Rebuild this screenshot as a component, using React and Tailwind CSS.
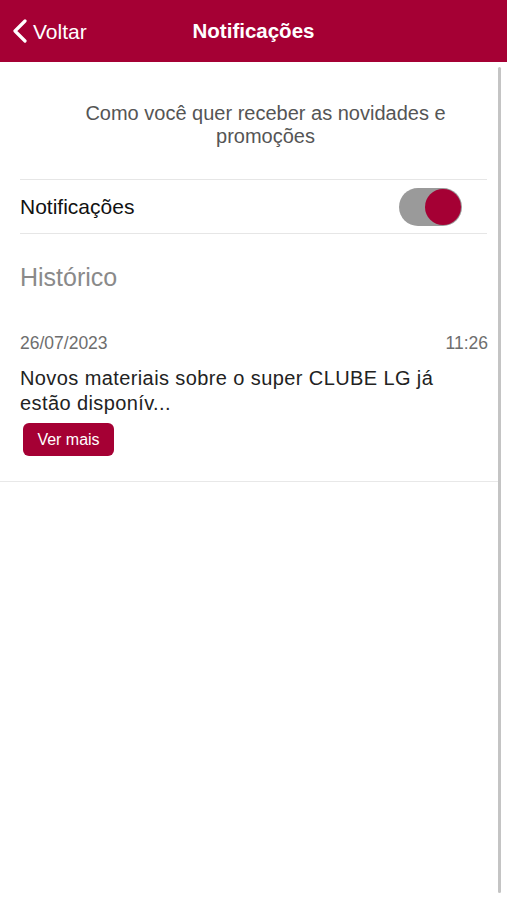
import React, { useState } from 'react'

const App = () => {
  const [enabled, setEnabled] = useState(true)

  return (
    <div className="relative w-[507px] h-[900px] bg-white overflow-hidden" style={{ fontFamily: '"Liberation Sans", Arial, sans-serif' }}>
      {/* Header */}
      <div className="relative h-[62px] bg-[#a50034] flex items-center justify-center">
        <button className="absolute left-[11px] top-0 h-full flex items-center gap-[4px] text-white">
          <svg width="18" height="24" viewBox="0 0 18 24" fill="none">
            <path d="M14 2 L4 12 L14 22" stroke="white" strokeWidth="3.2" strokeLinecap="round" strokeLinejoin="round" />
          </svg>
          <span className="text-[21px] leading-none">Voltar</span>
        </button>
        <h1 className="text-white text-[20.5px] font-bold leading-none">Notificações</h1>
      </div>

      {/* scroll indicator */}
      <div className="absolute right-[6px] top-[67px] w-[3px] h-[826px] rounded-full bg-[#c4c4c4]"></div>

      <div className="pt-[40px]">
        <p className="pl-[44px] pr-[20px] text-center text-[20px] leading-[23px] text-[#555]">
          Como você quer receber as novidades e promoções
        </p>

        <div className="mx-[20px] mt-[31px] border-t border-[#e6e6e6]"></div>
        <div className="mx-[20px] h-[53px] flex items-center justify-between">
          <span className="text-[21px] text-[#111]">Notificações</span>
          <button
            onClick={() => setEnabled(!enabled)}
            className="mr-[25px] w-[63px] h-[38px] rounded-full bg-[#9a9a9a] flex items-center justify-end pr-[1px]"
          >
            <span className={`w-[36px] h-[36px] rounded-full ${enabled ? 'bg-[#a50034]' : 'bg-white'}`}></span>
          </button>
        </div>
        <div className="mx-[20px] border-t border-[#e6e6e6]"></div>

        <h2 className="px-[20px] pt-[29px] text-[25px] leading-[28px] text-[#8a8a8a]">Histórico</h2>

        <div className="pt-[42px] pb-[25px] border-b border-[#e8e8e8] mr-[9px]">
          <div className="pl-[20px] pr-[10px] flex justify-between text-[17.5px] leading-[20px] text-[#6e6e6e]">
            <span>26/07/2023</span>
            <span>11:26</span>
          </div>
          <p className="pl-[20px] pr-[50px] mt-[13px] text-[20px] leading-[25px] text-[#222] tracking-[0.4px]">
            Novos materiais sobre o super CLUBE LG já estão disponív...
          </p>
          <button className="ml-[23px] mt-[7px] w-[91px] h-[33px] rounded-[6px] bg-[#a50034] text-white text-[16px]">
            Ver mais
          </button>
        </div>
      </div>
    </div>
  )
}

export default App
